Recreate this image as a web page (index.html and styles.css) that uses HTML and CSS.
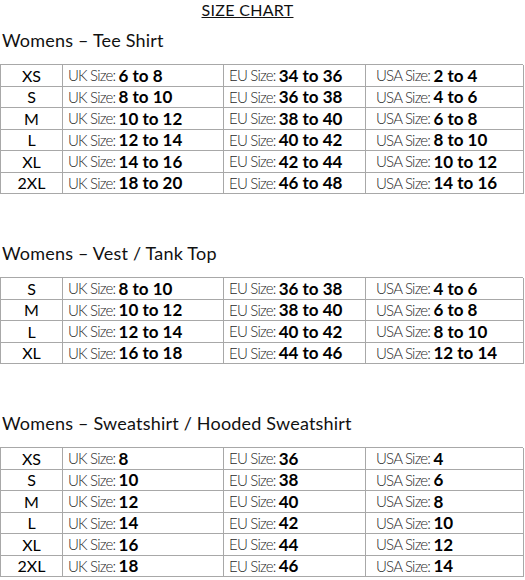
FILE: index.html
```html
<!DOCTYPE html>
<html>
<head>
<meta charset="utf-8">
<link rel="stylesheet" href="styles.css">
</head>
<body>
<div class="page">
  <h1 class="title">SIZE CHART</h1>

  <section class="chart first">
    <h2 class="heading">Womens – Tee Shirt</h2>
    <div class="grid">
      <div class="c size">XS</div><div class="c uk"><span class="lbl">UK Size: </span><b>6 to 8</b></div><div class="c eu"><span class="lbl">EU Size: </span><b>34 to 36</b></div><div class="c usa"><span class="lbl">USA Size: </span><b>2 to 4</b></div>
      <div class="c size">S</div><div class="c uk"><span class="lbl">UK Size: </span><b>8 to 10</b></div><div class="c eu"><span class="lbl">EU Size: </span><b>36 to 38</b></div><div class="c usa"><span class="lbl">USA Size: </span><b>4 to 6</b></div>
      <div class="c size">M</div><div class="c uk"><span class="lbl">UK Size: </span><b>10 to 12</b></div><div class="c eu"><span class="lbl">EU Size: </span><b>38 to 40</b></div><div class="c usa"><span class="lbl">USA Size: </span><b>6 to 8</b></div>
      <div class="c size">L</div><div class="c uk"><span class="lbl">UK Size: </span><b>12 to 14</b></div><div class="c eu"><span class="lbl">EU Size: </span><b>40 to 42</b></div><div class="c usa"><span class="lbl">USA Size: </span><b>8 to 10</b></div>
      <div class="c size">XL</div><div class="c uk"><span class="lbl">UK Size: </span><b>14 to 16</b></div><div class="c eu"><span class="lbl">EU Size: </span><b>42 to 44</b></div><div class="c usa"><span class="lbl">USA Size: </span><b>10 to 12</b></div>
      <div class="c size">2XL</div><div class="c uk"><span class="lbl">UK Size: </span><b>18 to 20</b></div><div class="c eu"><span class="lbl">EU Size: </span><b>46 to 48</b></div><div class="c usa"><span class="lbl">USA Size: </span><b>14 to 16</b></div>
    </div>
  </section>

  <section class="chart">
    <h2 class="heading">Womens – Vest / Tank Top</h2>
    <div class="grid">
      <div class="c size">S</div><div class="c uk"><span class="lbl">UK Size: </span><b>8 to 10</b></div><div class="c eu"><span class="lbl">EU Size: </span><b>36 to 38</b></div><div class="c usa"><span class="lbl">USA Size: </span><b>4 to 6</b></div>
      <div class="c size">M</div><div class="c uk"><span class="lbl">UK Size: </span><b>10 to 12</b></div><div class="c eu"><span class="lbl">EU Size: </span><b>38 to 40</b></div><div class="c usa"><span class="lbl">USA Size: </span><b>6 to 8</b></div>
      <div class="c size">L</div><div class="c uk"><span class="lbl">UK Size: </span><b>12 to 14</b></div><div class="c eu"><span class="lbl">EU Size: </span><b>40 to 42</b></div><div class="c usa"><span class="lbl">USA Size: </span><b>8 to 10</b></div>
      <div class="c size">XL</div><div class="c uk"><span class="lbl">UK Size: </span><b>16 to 18</b></div><div class="c eu"><span class="lbl">EU Size: </span><b>44 to 46</b></div><div class="c usa"><span class="lbl">USA Size: </span><b>12 to 14</b></div>
    </div>
  </section>

  <section class="chart">
    <h2 class="heading">Womens – Sweatshirt / Hooded Sweatshirt</h2>
    <div class="grid">
      <div class="c size">XS</div><div class="c uk"><span class="lbl">UK Size: </span><b>8</b></div><div class="c eu"><span class="lbl">EU Size: </span><b>36</b></div><div class="c usa"><span class="lbl">USA Size: </span><b>4</b></div>
      <div class="c size">S</div><div class="c uk"><span class="lbl">UK Size: </span><b>10</b></div><div class="c eu"><span class="lbl">EU Size: </span><b>38</b></div><div class="c usa"><span class="lbl">USA Size: </span><b>6</b></div>
      <div class="c size">M</div><div class="c uk"><span class="lbl">UK Size: </span><b>12</b></div><div class="c eu"><span class="lbl">EU Size: </span><b>40</b></div><div class="c usa"><span class="lbl">USA Size: </span><b>8</b></div>
      <div class="c size">L</div><div class="c uk"><span class="lbl">UK Size: </span><b>14</b></div><div class="c eu"><span class="lbl">EU Size: </span><b>42</b></div><div class="c usa"><span class="lbl">USA Size: </span><b>10</b></div>
      <div class="c size">XL</div><div class="c uk"><span class="lbl">UK Size: </span><b>16</b></div><div class="c eu"><span class="lbl">EU Size: </span><b>44</b></div><div class="c usa"><span class="lbl">USA Size: </span><b>12</b></div>
      <div class="c size">2XL</div><div class="c uk"><span class="lbl">UK Size: </span><b>18</b></div><div class="c eu"><span class="lbl">EU Size: </span><b>46</b></div><div class="c usa"><span class="lbl">USA Size: </span><b>14</b></div>
    </div>
  </section>
</div>
</body>
</html>
```

FILE: styles.css
```css
html, body {
  margin: 0;
  padding: 0;
  background: #fff;
}

.page {
  font-family: Lato, "Liberation Sans", sans-serif;
  color: #111;
  width: 525px;
}

.title {
  margin: 0;
  height: 19px;
  font-size: 16px;
  line-height: 19px;
  font-weight: 400;
  text-align: center;
  text-decoration: underline;
  text-underline-offset: 1px;
  text-decoration-thickness: 1px;
  padding-right: 30px;
  letter-spacing: 0.3px;
}

.chart {
  margin-top: 48px;
}

.chart.first {
  margin-top: 10px;
}

.heading {
  margin: 0 0 0 2px;
  font-size: 18px;
  line-height: 22px;
  font-weight: 400;
  height: 35px;
  letter-spacing: 0.2px;
}

.grid {
  display: grid;
  grid-template-columns: 62px 161px 142px 158px;
  grid-auto-rows: 21.5px;
  border-top: 1px solid #a8a8a8;
  border-left: 1px solid #a8a8a8;
  width: 523px;
  box-sizing: border-box;
}

.c {
  border-right: 1px solid #a8a8a8;
  border-bottom: 1px solid #a8a8a8;
  display: flex;
  align-items: center;
  white-space: nowrap;
  overflow: hidden;
}

.size {
  justify-content: center;
  font-size: 16px;
  font-weight: 400;
  color: #000;
}

.uk { padding-left: 5px; }
.eu { padding-left: 5px; }
.usa { padding-left: 10px; }

.lbl {
  font-size: 15px;
  font-weight: 300;
  letter-spacing: -0.8px;
  color: #2a2a2a;
  white-space: pre;
}

.c b {
  font-size: 17px;
  font-weight: 700;
  color: #000;
}
```
